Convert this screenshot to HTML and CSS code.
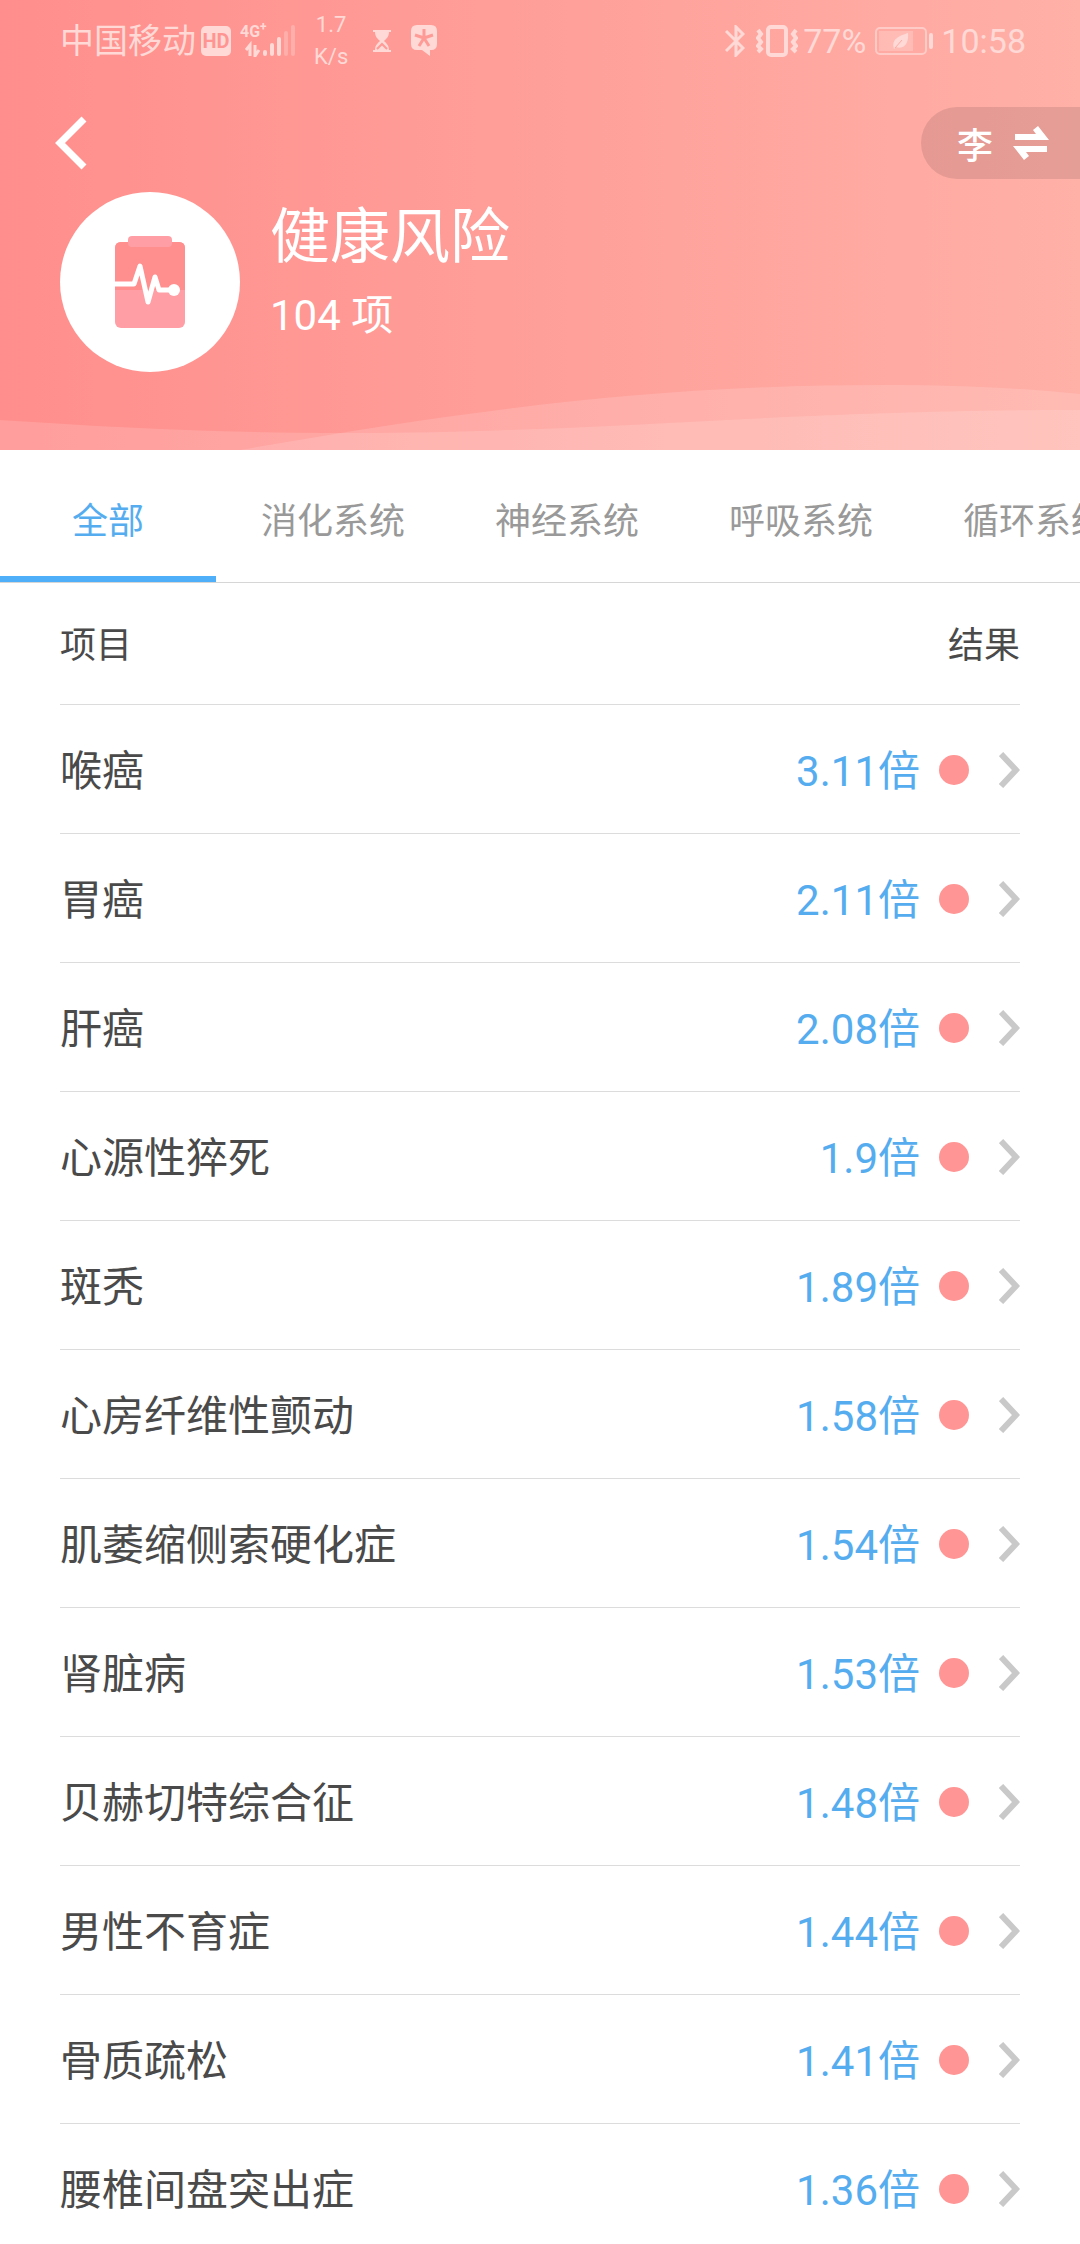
FILE: index.html
```html
<!DOCTYPE html>
<html lang="zh-CN">
  <head>
    <meta charset="UTF-8" />
    <meta name="viewport" content="width=device-width, initial-scale=1.0" />
    <title>健康风险</title>
    <link rel="stylesheet" href="styles.css">
  </head>
  <body>
    <!-- iconos compartidos -->
    <svg class="symbols" aria-hidden="true">
      <symbol id="arrow" viewBox="0 0 21 36">
        <path d="M2 2 L17 18 L2 34" fill="none" stroke="#c9c9c9" stroke-width="6" />
      </symbol>
    </svg>

    <header class="header">
      <svg class="waves" viewBox="0 0 1080 70" preserveAspectRatio="none" aria-hidden="true">
        <path d="M0 40 C120 48 230 53 350 53 C600 53 780 30 1080 30 V70 H0 Z" />
        <path d="M240 70 C480 28 660 5 885 5 C955 5 1020 8 1080 14 V70 Z" />
      </svg>

      <div class="status">
        <div class="status-left">
          <span class="carrier">中国移动</span>
          <span class="hd">HD</span>
          <span class="signal">
            <span class="net">4G<sup>+</sup></span>
            <svg width="56" height="32" viewBox="0 0 56 32" fill="currentColor" aria-hidden="true">
              <path d="M6 25 L10 20 V31" fill="none" stroke="currentColor" stroke-width="3" />
              <path d="M15 20 V31 L19 25" fill="none" stroke="currentColor" stroke-width="3" />
              <rect x="23" y="25" width="4" height="6" rx="2" />
              <rect x="30" y="18" width="4" height="13" rx="2" />
              <rect x="37" y="12" width="4" height="19" rx="2" />
              <rect x="44" y="6" width="4" height="25" rx="2" opacity=".35" />
              <rect x="51" y="0" width="4" height="31" rx="2" opacity=".35" />
            </svg>
          </span>
          <span class="speed">1.7<br>K/s</span>
          <svg class="hourglass" width="18" height="22" viewBox="0 0 18 22" aria-hidden="true">
            <path d="M0 0 H18 V2 H16 C16 7 13 9 11 11 C13 13 16 15 16 20 H18 V22 H0 V20 H2 C2 15 5 13 7 11 C5 9 2 7 2 2 H0 Z" fill="currentColor" />
            <path d="M4 19 L9 14 L14 19" fill="none" stroke="#ff9a96" stroke-width="2" />
          </svg>
          <svg class="bubble" width="26" height="32" viewBox="0 0 26 32" aria-hidden="true">
            <path d="M6 0 H20 Q26 0 26 6 V19 Q26 25 20 25 H19 V31 L11 25 H6 Q0 25 0 19 V6 Q0 0 6 0 Z" fill="currentColor" />
            <path d="M13 4 V13 M13 13 L4 10 M13 13 L22 10 M13 13 L8 21 M13 13 L18 21" fill="none" stroke="#ff9b97" stroke-width="3" />
          </svg>
        </div>
        <div class="status-right">
          <svg width="20" height="32" viewBox="0 0 20 32" fill="none" stroke="currentColor" stroke-width="3" aria-hidden="true">
            <path d="M1 6 L18 23 L11 30 V2 L18 9 L1 26" />
          </svg>
          <svg class="vibrate" width="42" height="32" viewBox="0 0 42 32" fill="none" stroke="currentColor" stroke-width="4" aria-hidden="true">
            <rect x="12" y="2" width="18" height="28" rx="3" />
            <path d="M2 5 L5 9 L2 13 L5 17 L2 21 L5 24 L2 27 M40 5 L37 9 L40 13 L37 17 L40 21 L37 24 L40 27" />
          </svg>
          <span>77%</span>
          <svg class="battery" width="58" height="28" viewBox="0 0 58 28" fill="none" aria-hidden="true">
            <rect x="1" y="1" width="50" height="26" rx="4" stroke="currentColor" stroke-width="2" opacity=".7" />
            <rect x="4" y="4" width="34" height="20" fill="#fff" opacity=".2" />
            <rect x="54" y="6" width="4" height="16" rx="2" fill="currentColor" />
            <path d="M19 22 C16 12 24 9 33 6 C34 15 30 23 21 20 L19 22 Z" fill="currentColor" />
            <path d="M20 21 L27 13" stroke="#ffaba4" stroke-width="1" />
          </svg>
          <span>10:58</span>
        </div>
      </div>

      <div class="bar">
        <button class="back" type="button" aria-label="返回">
          <svg width="32" height="54" viewBox="0 0 32 54" aria-hidden="true">
            <path d="M29 3 L5 27 L29 51" fill="none" stroke="#fff" stroke-width="7" />
          </svg>
        </button>
        <button class="switch" type="button">
          <span>李</span>
          <svg width="36" height="34" viewBox="0 0 36 34" fill="#fff" aria-hidden="true">
            <path d="M2 8 H23 L20 4 L25 0 L36 14 H2 Z" />
            <path d="M34 26 H13 L16 30 L11 34 L0 20 H34 Z" />
          </svg>
        </button>
      </div>

      <div class="summary">
        <div class="logo">
          <svg width="70" height="92" viewBox="0 0 70 92" aria-hidden="true">
            <rect y="6" width="70" height="86" rx="6" fill="#ff9fa5" />
            <path d="M0 54 V12 Q0 6 6 6 H64 Q70 6 70 12 V54 Z" fill="#ff8f8e" />
            <rect x="13" y="0" width="44" height="11" rx="4" fill="#ff9fa5" />
            <path d="M0 48 H19 L25 30 L33 66 L40 41 L44 54 H58" fill="none" stroke="#fff" stroke-width="5" stroke-linejoin="round" />
            <circle cx="59" cy="54" r="6" fill="#fff" />
          </svg>
        </div>
        <div>
          <h1 class="title">健康风险</h1>
          <p class="count">104 项</p>
        </div>
      </div>
    </header>

    <nav class="tabs">
      <button class="tab active" type="button">全部</button>
      <button class="tab" type="button">消化系统</button>
      <button class="tab" type="button">神经系统</button>
      <button class="tab" type="button">呼吸系统</button>
      <button class="tab" type="button">循环系统</button>
    </nav>

    <main class="list">
      <table class="risks">
        <thead>
          <tr><th>项目</th><th class="right">结果</th></tr>
        </thead>
        <tbody>
          <tr><td>喉癌</td><td><div class="result">3.11倍<i class="dot"></i><svg class="arrow"><use href="#arrow" /></svg></div></td></tr>
          <tr><td>胃癌</td><td><div class="result">2.11倍<i class="dot"></i><svg class="arrow"><use href="#arrow" /></svg></div></td></tr>
          <tr><td>肝癌</td><td><div class="result">2.08倍<i class="dot"></i><svg class="arrow"><use href="#arrow" /></svg></div></td></tr>
          <tr><td>心源性猝死</td><td><div class="result">1.9倍<i class="dot"></i><svg class="arrow"><use href="#arrow" /></svg></div></td></tr>
          <tr><td>斑秃</td><td><div class="result">1.89倍<i class="dot"></i><svg class="arrow"><use href="#arrow" /></svg></div></td></tr>
          <tr><td>心房纤维性颤动</td><td><div class="result">1.58倍<i class="dot"></i><svg class="arrow"><use href="#arrow" /></svg></div></td></tr>
          <tr><td>肌萎缩侧索硬化症</td><td><div class="result">1.54倍<i class="dot"></i><svg class="arrow"><use href="#arrow" /></svg></div></td></tr>
          <tr><td>肾脏病</td><td><div class="result">1.53倍<i class="dot"></i><svg class="arrow"><use href="#arrow" /></svg></div></td></tr>
          <tr><td>贝赫切特综合征</td><td><div class="result">1.48倍<i class="dot"></i><svg class="arrow"><use href="#arrow" /></svg></div></td></tr>
          <tr><td>男性不育症</td><td><div class="result">1.44倍<i class="dot"></i><svg class="arrow"><use href="#arrow" /></svg></div></td></tr>
          <tr><td>骨质疏松</td><td><div class="result">1.41倍<i class="dot"></i><svg class="arrow"><use href="#arrow" /></svg></div></td></tr>
          <tr><td>腰椎间盘突出症</td><td><div class="result">1.36倍<i class="dot"></i><svg class="arrow"><use href="#arrow" /></svg></div></td></tr>
        </tbody>
      </table>
    </main>
  </body>
</html>
```

FILE: styles.css
```css
*,
*::after,
*::before {
  box-sizing: border-box;
}

body {
  margin: 0;
  height: 100vh;
  display: flex;
  flex-direction: column;
  background-color: #fff;
  color: #4a4a4a;
  font-family: Roboto, "Noto Sans CJK SC", sans-serif;
  font-size: 42px;
}

button {
  border: 0;
  padding: 0;
  background: none;
  font: inherit;
  color: inherit;
}

svg {
  display: block;
  flex-shrink: 0;
}

.symbols {
  position: absolute;
  width: 0;
  height: 0;
}

/* cabecera */
.header {
  position: relative;
  flex-shrink: 0;
  padding-bottom: 78px;
  background: linear-gradient(to right, #ff8e8c, #ffb0a7);
  color: #fff;
}

/* las olas van por detrás del contenido */
.waves {
  position: absolute;
  left: 0;
  bottom: 0;
  width: 100%;
  height: 70px;
  fill: #fff;
  fill-opacity: .14;
}

/* barra de estado */
.status {
  display: flex;
  justify-content: space-between;
  height: 82px;
  padding: 0 54px 0 60px;
  font-size: 34px;
  line-height: 40px;
  color: #ffd9d6;
}

.status-left,
.status-right {
  display: flex;
  align-items: center;
}

.hd {
  width: 30px;
  margin-left: 5px;
  border-radius: 5px;
  background-color: #ffd9d6;
  color: #ff9592;
  font-size: 20px;
  font-weight: 700;
  line-height: 30px;
  text-align: center;
}

.signal {
  position: relative;
  margin-left: 9px;
}

.net {
  position: absolute;
  top: 0;
  left: 0;
  font-size: 16px;
  font-weight: 700;
  line-height: 14px;
}

.net sup {
  font-size: 12px;
  line-height: 0;
}

.speed {
  margin-left: 18px;
  font-size: 22px;
  line-height: 32px;
  text-align: center;
}

.hourglass {
  margin-left: 25px;
}

.bubble {
  margin-left: 20px;
}

.vibrate {
  margin: 0 5px 0 11px;
}

.battery {
  margin: 0 8px 0 9px;
}

.bar {
  display: flex;
  justify-content: space-between;
  align-items: center;
  margin-top: 25px;
  padding-left: 55px;
}

.switch {
  display: flex;
  align-items: center;
  gap: 20px;
  height: 72px;
  padding: 0 31px 0 36px;
  border-radius: 36px 0 0 36px;
  background-color: rgba(0, 0, 0, .1);
  font-size: 36px;
  font-weight: 500;
}

.summary {
  display: flex;
  gap: 30px;
  margin-top: 13px;
  padding: 0 60px;
}

.logo {
  display: flex;
  justify-content: center;
  align-items: center;
  width: 180px;
  height: 180px;
  border-radius: 50%;
  background-color: #fff;
}

.title {
  margin: 0;
  font-size: 60px;
  font-weight: 400;
  line-height: 92px;
}

.count {
  margin: 0;
  line-height: 64px;
}

/* pestañas */
.tabs {
  display: flex;
  flex-shrink: 0;
  overflow: hidden;
  border-bottom: 1px solid #d6d6d6;
}

.tab {
  flex-shrink: 0;
  height: 132px;
  padding: 10px 45px 0;
  border-bottom: 6px solid transparent;
  font-size: 36px;
  color: #999;
}

.active {
  padding: 10px 72px 0;
  border-bottom-color: #4fb0f9;
  color: #55adf0;
}

/* lista de riesgos */
.list {
  flex: 1;
  overflow-y: auto;
  padding: 0 60px;
  scrollbar-width: none;
}

.risks {
  width: 100%;
  border-collapse: separate;
  border-spacing: 0;
}

.risks th,
.risks td {
  height: 129px;
  padding: 0 0 3px;
  border-bottom: 1px solid #dcdcdc;
}

.risks th {
  height: 122px;
  font-size: 36px;
  font-weight: 400;
  text-align: left;
}

.risks .right {
  text-align: right;
}

.result {
  display: flex;
  justify-content: flex-end;
  align-items: center;
  color: #55adf0;
}

.dot {
  width: 30px;
  height: 30px;
  margin: 4px 30px 0 19px;
  border-radius: 50%;
  background-color: #ff9594;
}

.arrow {
  width: 21px;
  height: 36px;
  margin-top: 4px;
}
```
